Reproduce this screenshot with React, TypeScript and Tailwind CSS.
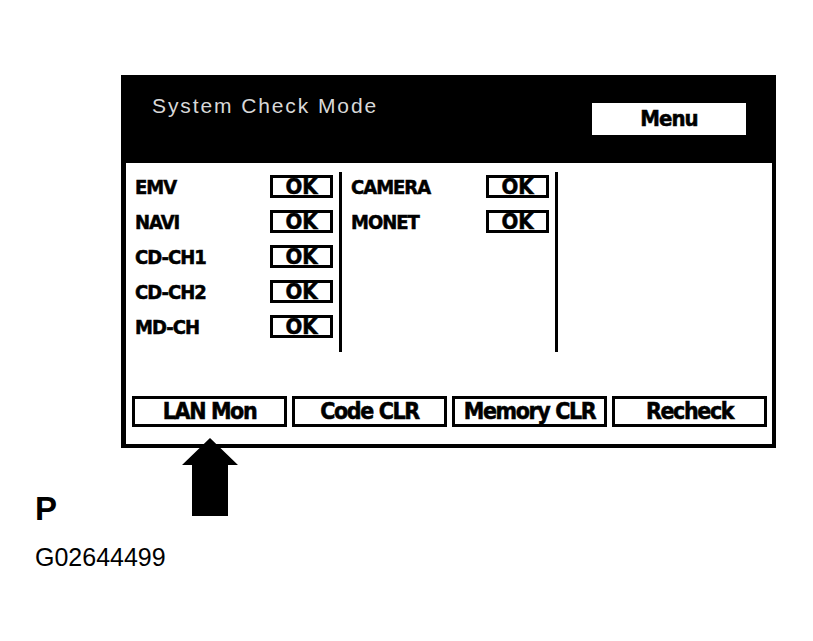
import React from "react";

const cond = {
  fontFamily: '"Liberation Sans Narrow", "DejaVu Sans Condensed", "Liberation Sans", sans-serif',
};

function OkBox() {
  return (
    <div
      className="w-[63px] h-[23px] border-[3px] border-black flex items-center justify-center text-[22px] font-bold leading-none text-black [-webkit-text-stroke:0.5px_black]"
      style={cond}
    >
      OK
    </div>
  );
}

function Row({ label }: { label: string }) {
  return (
    <div className="flex items-center h-[23px]">
      <span
        className="w-[135px] text-[20px] font-bold tracking-[-1px] leading-none [-webkit-text-stroke:0.5px_black]"
        style={cond}
      >
        {label}
      </span>
      <OkBox />
    </div>
  );
}

function Btn({ label }: { label: string }) {
  return (
    <div
      className="w-[155px] h-[31px] border-[3px] border-black flex items-center justify-center text-[23px] font-bold tracking-[-1.4px] leading-none [-webkit-text-stroke:0.5px_black]"
      style={cond}
    >
      {label}
    </div>
  );
}

export default function App() {
  return (
    <div className="relative w-[813px] h-[641px] bg-white text-black overflow-hidden">
      <div className="pt-[75px] pl-[121px]">
        {/* Screen frame */}
        <div className="w-[655px] h-[373px] flex flex-col">
          {/* Header */}
          <div className="h-[88px] bg-black flex items-start justify-between pl-[31px] pr-[30px]">
            <span
              className="mt-[20px] text-[21px] tracking-[1.9px] text-[#d8d8d8] leading-none"
              style={{ fontFamily: '"Liberation Sans", sans-serif' }}
            >
              System Check Mode
            </span>
            <div
              className="mt-[28px] w-[154px] h-[32px] bg-white flex items-center justify-center text-[22px] font-bold tracking-[-1px] leading-none [-webkit-text-stroke:0.5px_black]"
              style={cond}
            >
              Menu
            </div>
          </div>

          {/* Body */}
          <div className="flex-1 border-l-[5px] border-r-[4px] border-b-[4px] border-black flex flex-col">
            <div className="flex pl-[9px] pt-[9px]">
              <div className="flex flex-col gap-[12px] pt-[3px] w-[204px]">
                <Row label="EMV" />
                <Row label="NAVI" />
                <Row label="CD-CH1" />
                <Row label="CD-CH2" />
                <Row label="MD-CH" />
              </div>
              <div className="w-[3px] h-[180px] bg-black" />
              <div className="flex flex-col gap-[12px] pt-[3px] pl-[9px] w-[213px]">
                <Row label="CAMERA" />
                <Row label="MONET" />
              </div>
              <div className="w-[3px] h-[180px] bg-black" />
            </div>

            <div className="mt-[44px] pl-[6px] flex gap-[5px]">
              <Btn label="LAN Mon" />
              <Btn label="Code CLR" />
              <Btn label="Memory CLR" />
              <Btn label="Recheck" />
            </div>
          </div>
        </div>

        {/* Figure caption */}
        <div className="mt-[44px] -ml-[86px]">
          <div className="text-[33px] font-bold leading-none" style={{ fontFamily: '"Liberation Sans", sans-serif' }}>
            P
          </div>
          <div className="mt-[20px] text-[25px] leading-none" style={{ fontFamily: '"Liberation Sans", sans-serif' }}>
            G02644499
          </div>
        </div>
      </div>

      {/* Arrow pointing at LAN Mon */}
      <svg className="absolute left-[181px] top-[437px]" width="58" height="80" viewBox="0 0 58 80">
        <polygon points="29,1 57,28 47,28 47,79 11,79 11,28 1,28" fill="black" />
      </svg>
    </div>
  );
}
